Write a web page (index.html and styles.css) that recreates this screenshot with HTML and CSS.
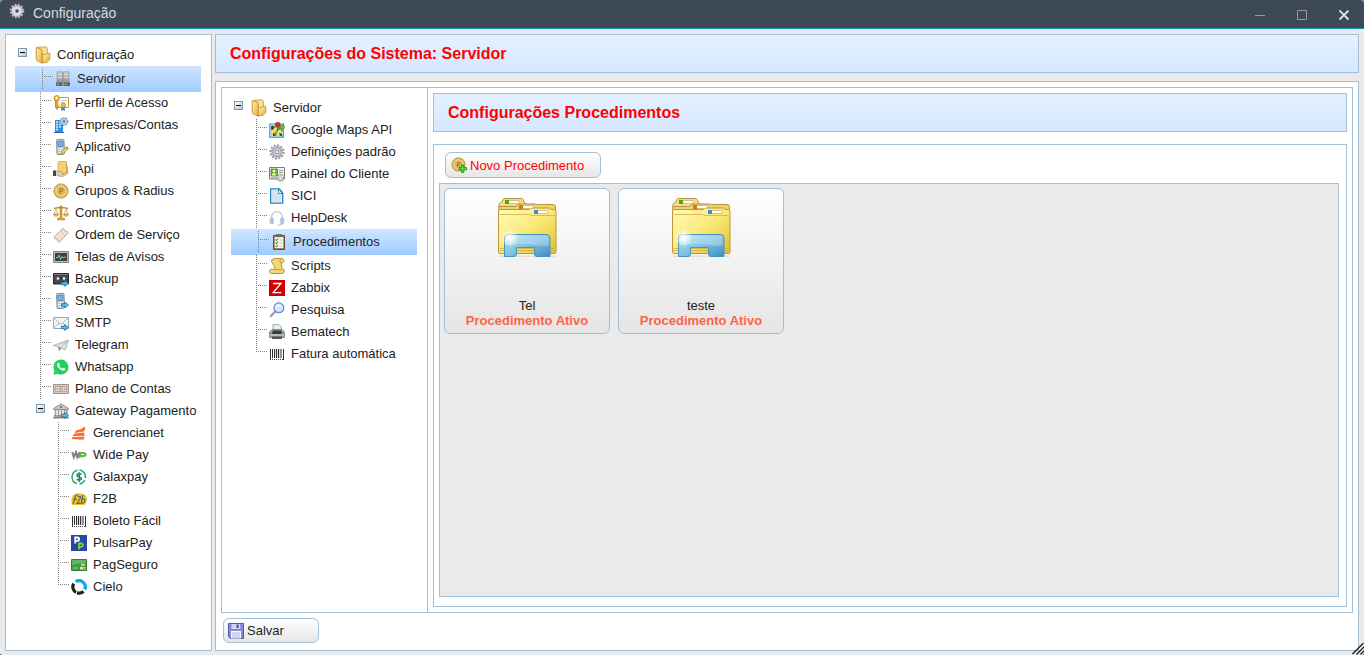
FILE: index.html
```html
<!DOCTYPE html>
<html lang="pt-BR">
<head>
<meta charset="utf-8">
<title>Configuração</title>
<link rel="stylesheet" href="styles.css">
</head>
<body>
<svg class="sprite" aria-hidden="true">
  <defs>
    <linearGradient id="g-file" x1="0" y1="0" x2="1" y2="1"><stop offset="0" stop-color="#fffbc0"/><stop offset=".5" stop-color="#fbe978"/><stop offset="1" stop-color="#dfc02c"/></linearGradient>
    <linearGradient id="g-tray" x1="0" y1="0" x2="1" y2="1"><stop offset="0" stop-color="#aee6f4"/><stop offset=".5" stop-color="#7fc1e3"/><stop offset="1" stop-color="#3e8cc4"/></linearGradient>
    <radialGradient id="g-glow"><stop offset="0" stop-color="#fff"/><stop offset=".3" stop-color="#fff" stop-opacity=".7"/><stop offset="1" stop-color="#fff" stop-opacity="0"/></radialGradient>
    <linearGradient id="g-folder" x1="0" y1="0" x2="1" y2="1"><stop offset="0" stop-color="#fff0ae"/><stop offset="1" stop-color="#e6ae38"/></linearGradient>
    <linearGradient id="g-rack" x1="0" y1="0" x2="0" y2="1"><stop offset="0" stop-color="#cfcfcf"/><stop offset="1" stop-color="#8f8f8f"/></linearGradient>
  </defs>
  <symbol id="arrow" viewBox="0 0 8 7"><path d="M.5 2.300h3.200V.6L7.400 3.500 3.700 6.400V4.700H.5z" fill="#5cc0f5" stroke="#1d6fae" stroke-width=".9"/></symbol>
  <symbol id="folder" viewBox="0 0 16 18">
    <path d="M3 1h8.500l.8 1.500V13H3z" fill="#fbe09a" stroke="#cf9c30" stroke-width=".9"/>
    <path d="M1.200 1.500l5 1.700c.8.300 1 .8 1 1.500v12.600l-5-2.600c-.7-.4-1-.9-1-1.600z" fill="url(#g-folder)" stroke="#c28e25" stroke-width=".9"/>
    <path d="M7.500 16.800V8.500h3l1-1.200h3.300v6.200L12 16.200z" fill="url(#g-folder)" stroke="#c9962a" stroke-width=".9"/>
  </symbol>
  <symbol id="server" viewBox="0 0 16 16">
    <path d="M2 .8h5.500v11.500H2zM8.500.8H14v11.500H8.500z" fill="url(#g-rack)" stroke="#8a8a8a" stroke-width=".6"/>
    <path d="M2.500 3.500H7M2.500 6.500H7M9 3.500h4.500M9 6.500h4.500" stroke="#e6e6e6" stroke-width=".8"/>
    <path d="M1 11.500h6.500V15H1zM8.500 11.500H15V15H8.500z" fill="#5f6160"/><path d="M2 13.300h2M9.800 13.300h2" stroke="#8fe08f"/>
  </symbol>
  <symbol id="profile" viewBox="0 0 16 16">
    <path d="M2.500 2.500h13v10h-13z" fill="#fdfdf4" stroke="#c59a3c"/><path d="M8 5.500h6M8 7.500h4" stroke="#b8b8c8" stroke-width=".8"/>
    <path d="M8.700 11L8 16l2-1 2 1-.5-5z" fill="#2f7ed0"/><circle cx="10.300" cy="10.500" r="2.300" fill="#f5c02e" stroke="#b37d12" stroke-width=".7"/>
    <path d="M3.200 5v8.500l1.300 1.200V12h1.200v-1.500H4.700V5z" fill="#f2bb2e" stroke="#b07c14" stroke-width=".7"/><circle cx="3.700" cy="3.300" r="2.700" fill="#f8d155" stroke="#b07c14" stroke-width=".9"/><circle cx="3.700" cy="2.700" r=".9" fill="#fff"/>
  </symbol>
  <symbol id="company" viewBox="0 0 16 16">
    <path d="M2 3h8v12H2z" fill="#2f8ede"/><path d="M3 5h2M6 5h2M3 7.500h2M6 7.500h2M3 10h2M6 10h2M3 12.500h2" stroke="#d7efff" stroke-width="1.400"/><path d="M1 15.500h10" stroke="#1f64ab"/>
    <circle cx="11" cy="4.500" r="3.600" fill="#b9cfe2" stroke="#7699b8" stroke-dasharray="1.500 1.100" stroke-width="1.600"/><circle cx="11" cy="4.500" r="1.200" fill="#5b7f9f"/>
  </symbol>
  <symbol id="phone" viewBox="0 0 16 16">
    <path d="M9.500 0h1v2h-1z" fill="#888"/><path d="M3.500 1.500q0-1 1-1h5.500q1 0 1 1l.5 12.500q0 1-1 1.300l-5.500.3q-1 0-1-1z" fill="#c3c7cb" stroke="#81868c" stroke-width=".9"/><path d="M5 2.500h4.800v5H5z" fill="#6bb8f0" stroke="#3a6c9c" stroke-width=".6"/>
    <path d="M5.200 9.500h5M5.200 11.500h5M5.200 13.500h5" stroke="#fafafa" stroke-width="1.200" stroke-dasharray="1.300 .5"/>
  </symbol>
  <symbol id="app" viewBox="0 0 16 16"><use href="#phone" width="16" height="16"/><path d="M7.500 15.500l.8-2.600 5-5 1.800 1.800-5 5z" fill="#f2d14d" stroke="#6d8730" stroke-width=".6"/><path d="M12.800 8.400l1-1 1.700 1.700-1 1z" fill="#e0564b"/></symbol>
  <symbol id="sms" viewBox="0 0 16 16"><use href="#phone" width="16" height="16"/><use href="#arrow" x="8" y="8.500" width="8" height="7"/></symbol>
  <symbol id="api" viewBox="0 0 16 16">
    <path d="M5 1.500q0-1 1-1h7.500v12H6l-1-1z" fill="#f3cf75" stroke="#d8a94a" stroke-width=".8"/><path d="M13 1v11h2V6l-1-2z" fill="#d9a84a"/>
    <path d="M4 10.500h3l3 1.500c1 .5 0 1.300-1 1.200 2.500 0 4-1.700 6-2.200.8.500-1 2.300-4 4.200H6l-2-1z" fill="#eecba5" stroke="#ad8158" stroke-width=".6"/><path d="M0 9.500h3.800V15H0z" fill="#47424b"/><path d="M3 10h1v5H3z" fill="#ddd"/>
  </symbol>
  <symbol id="coin" viewBox="0 0 16 16"><circle cx="8" cy="8" r="7.100" fill="#e0b75a" stroke="#b38c3a" stroke-width=".8"/><circle cx="8" cy="8" r="5" fill="#dfb75a" stroke="#f5e0a8"/><path d="M6.900 10.800V5.700h1.600a1.400 1.400 0 0 1 0 2.900H7" fill="none" stroke="#94702a" stroke-width=".9"/></symbol>
  <symbol id="scale" viewBox="0 0 16 16">
    <path d="M7 1h2v12h2.500v2h-7v-2H7z" fill="#dba733" stroke="#a9771b" stroke-width=".5"/><path d="M1 3.500c3-.3 4-1 7-1s4 .7 7 1" fill="none" stroke="#b98521" stroke-width="1.300"/>
    <path d="M3 4L1 9h4L3 4zM13 4l-2 5h4l-2-5z" fill="none" stroke="#c39b50" stroke-width=".7"/><path d="M.3 9.300h5.400c-.5 2.600-4.800 2.600-5.400 0zM10.300 9.300h5.400c-.5 2.600-4.800 2.600-5.400 0z" fill="#e7bb4d" stroke="#a9771b" stroke-width=".5"/>
  </symbol>
  <symbol id="ticket" viewBox="0 0 16 16"><path d="M.8 10.500l9-9 1.500.9c-.2 1.700 1 2.400 2.500 1.900l1.500 1.400-9 9.500-1.700-1c.2-1.800-.9-2.700-2.400-2.300z" fill="#f2e3d3" stroke="#b29b88" stroke-width=".9"/><path d="M7.500 4.200l4.400 4.500" stroke="#c4ae9a" stroke-dasharray="1 .8"/></symbol>
  <symbol id="monitor" viewBox="0 0 16 16"><path d="M.5 2.500h15v11H.5z" fill="#bcbcbc" stroke="#858585"/><path d="M2 4h12v8H2z" fill="#3b4241"/><path d="M3 8.500h2l1-2.500 1.500 4.500L9 7.500l1 1.500 1-.8h2" fill="none" stroke="#7ce0b5" stroke-width=".9"/></symbol>
  <symbol id="tape" viewBox="0 0 16 16"><path d="M.5 2.500h15v10.500H.5z" fill="#444" stroke="#2b2b2b"/><path d="M1 3.500h14" stroke="#777"/><path d="M2.500 5.500h11v4h-11z" fill="#555"/><circle cx="5" cy="7.500" r="1.300" fill="#eee"/><circle cx="11" cy="7.500" r="1.300" fill="#eee"/><path d="M7 6.500h2v2H7z" fill="#222"/><use href="#arrow" x="8" y="9" width="8" height="7"/></symbol>
  <symbol id="mail" viewBox="0 0 16 16"><path d="M.5 2.500h15v11H.5z" fill="#f1f6f5" stroke="#9aabab"/><path d="M.8 3l7.200 6.500L15.200 3M.8 13.200L6 8M15 13l-5-5" fill="none" stroke="#9aabab" stroke-width=".8"/><use href="#arrow" x="8" y="9" width="8" height="7"/></symbol>
  <symbol id="plane" viewBox="0 0 16 16"><path d="M.3 8.500L15.500 3l-3.300 10-4-2-2 3-.9-4z" fill="#dce5e5" stroke="#9aabab" stroke-width=".8"/><path d="M5.300 9.700L15 3.300 8.200 11l-2 2.700z" fill="#8f9e9e"/><path d="M6 9.700l7-5-5 5.500z" fill="#fff"/></symbol>
  <symbol id="whatsapp" viewBox="0 0 16 16"><path d="M.2 15.800l1.200-4.100A7.500 7.500 0 1 1 4.500 14.700z" fill="#25d05c"/><path d="M4.700 4.300c.7-.8 1.300-.6 1.500 0l.6 1.400c.1.500-.8.900-.6 1.300.8 1.400 1.700 2.200 3 2.700.5.200.8-1 1.300-.9l1.600.8c.6.300 0 1.700-.9 2-2.500.9-7.500-3.500-7-6 .1-.6.300-1 .5-1.300z" fill="#fff"/></symbol>
  <symbol id="bill" viewBox="0 0 16 16"><path d="M.5 3.500h15v9H.5z" fill="#d9cbbb" stroke="#a4948a"/><path d="M2.500 5.500h11v5h-11z" fill="#e9dfd3" stroke="#b8a79a"/><circle cx="8" cy="8" r="2" fill="#a18f80"/><path d="M8 6.500v3" stroke="#fff"/><path d="M3.500 8h1.500M11 8h1.500" stroke="#85766a"/></symbol>
  <symbol id="bank" viewBox="0 0 16 16"><path d="M.5 5.500L8 .8l7.500 4.700v1H.5z" fill="#c7c7c7" stroke="#7b7b7b" stroke-width=".8"/><circle cx="8" cy="4" r="1" fill="#666"/><path d="M2.500 7v6M5.500 7v6M8.500 7v6M11.500 7v6M13.800 7v6" stroke="#8c8c8c" stroke-width="1.500"/><path d="M3 7v6M6 7v6M9 7v6M12 7v6" stroke="#ddd" stroke-width=".5"/><path d="M1 13h14M.3 14.800h15.400" stroke="#858585" stroke-width="1.500"/><use href="#arrow" x="8" y="9" width="8" height="7"/></symbol>
  <symbol id="gerencianet" viewBox="0 0 16 16"><path d="M5 5.600C8 4.900 11 3.700 14.200 1.400c0 2.200-.3 3.900-1.300 5.200L3.500 8zM3 8.800l9.800-1.300c.6 1 .9 2.100.9 3.300L1.600 11.300zM1.200 12.300l12-.8c0 1.300-.2 2.300-.6 3.300L.6 14z" fill="#f37032"/></symbol>
  <symbol id="widepay" viewBox="0 0 16 16"><path d="M1.200 5l1.600 5.200L5 5.200l1.300 5L8.800 5" fill="none" stroke="#7b807d" stroke-width="2"/><path d="M8 11l1.500-5h3.400c2.500.4 1.800 3.200-.7 3.200H9" fill="none" stroke="#67b345" stroke-width="2.200"/></symbol>
  <symbol id="galaxpay" viewBox="0 0 16 16"><path d="M6.500 1.200A7 7 0 0 0 6 14.700M8.500 1a7 7 0 0 1 6 8M13.800 11a7 7 0 0 1-5.300 4" fill="none" stroke="#23a670" stroke-width="1.400"/><path d="M10.500 5.600c-1-1.300-4.600-1-4.500.8.100 2.200 4.600 1 4.600 3.200 0 1.800-3.800 2-4.800.5M8.200 3.200v9.700" fill="none" stroke="#168b58" stroke-width="1.500"/></symbol>
  <symbol id="f2b" viewBox="0 0 16 16"><path d="M1 6c2-5 13-5 14.500 0 1 5-1 8-2.500 8H2C0 13 0 9 1 6z" fill="#efc51f"/><path d="M2 13L4.300 5.500C4.800 4 5.800 3.500 7 4M2.500 8.300h3M7 6.200c1-1.500 3-1 2.500.6L6 12.300h3.500M12 3.800L10.300 12c2.200.8 3.800-1 3.700-2.600-.2-1.500-1.800-1.500-2.800-.7" fill="none" stroke="#59606a" stroke-width="1.200"/></symbol>
  <symbol id="barcode" viewBox="0 0 16 16"><path d="M1.500 3v11M3.500 3v9M5.500 3v9M9.500 3v9M12 3v9M14.500 3v11" stroke="#333"/><path d="M7.500 3v9" stroke="#333" stroke-width="1.300"/><path d="M11 3v9" stroke="#777" stroke-width=".6"/><path d="M3 13.500h11" stroke="#444" stroke-dasharray="1 1"/></symbol>
  <symbol id="pulsar" viewBox="0 0 16 16"><path d="M0 0h16v16H0z" fill="#2747a5"/><path d="M4.200 8.500V2.500h2.200a1.600 1.600 0 0 1 0 3.400H4.200" fill="none" stroke="#fff" stroke-width="1.800"/><path d="M8 14.500V8.500h2.200a1.600 1.600 0 0 1 0 3.400H8" fill="none" stroke="#7fd13b" stroke-width="1.800"/></symbol>
  <symbol id="card" viewBox="0 0 16 16"><path d="M.5 2.500h15v11H.5z" fill="#3d9a41" stroke="#2f8035"/><path d="M1 3h14v2.500L1 8z" fill="#62b765"/><path d="M2 11h5" stroke="#bfe8bf" stroke-dasharray="1.200 .6"/><path d="M10 6.500h4V9h-4z" fill="#e3c75a"/><path d="M9 10h5.500v2.500H9z" fill="#d7dfdc"/><path d="M12 10.500h2v1.500h-2z" fill="#e0763b"/></symbol>
  <symbol id="cielo" viewBox="0 0 16 16"><path d="M4.600 2.600A6.300 6.300 0 0 1 13.700 10.500" fill="none" stroke="#12a9ee" stroke-width="3.300"/><path d="M2.700 4.600A6.300 6.300 0 0 0 5 13.300M6 13.800a6.300 6.300 0 0 0 6.500-1.500" fill="none" stroke="#222" stroke-width="3.200"/></symbol>
  <symbol id="map" viewBox="0 0 16 16"><path d="M.8 2h13.500v13.200H.8z" fill="#fff" stroke="#3a8fc4" stroke-width="1.200"/><path d="M2.200 3.500H13v10.300H2.200z" fill="#58a83c"/><path d="M2.200 9l3-3 4-1-5 8.800h-2zM7 13.800l2-5.500 4-1v3.500l-2 3z" fill="#f0df74"/><path d="M2.200 4h2.300v3.500H2.200zM4 10.500l3 3.300H4zM10 11l3 1v1.800h-2z" fill="#353a31"/><path d="M8.600 4v5M12.800 6v4" stroke="#555" stroke-width=".8"/><circle cx="8.700" cy="2.500" r="2.300" fill="#e02b20" stroke="#9c1812" stroke-width=".6"/><circle cx="13.300" cy="5" r="2.200" fill="#6fc228" stroke="#3e8014" stroke-width=".6"/></symbol>
  <symbol id="gear" viewBox="0 0 16 16"><circle cx="8" cy="8" r="6.600" fill="none" stroke="#9395a3" stroke-width="2" stroke-dasharray="1.900 1.550"/><circle cx="8" cy="8" r="5.900" fill="#aeb0bd"/><circle cx="8" cy="8" r="4" fill="#cdced8" stroke="#9b9dab" stroke-width=".6"/><circle cx="8" cy="8" r="1.700" fill="#fff" stroke="#777a88" stroke-width=".8"/></symbol>
  <symbol id="titlegear" viewBox="0 0 16 16"><circle cx="8" cy="8" r="6.300" fill="none" stroke="#b7b9c8" stroke-width="2" stroke-dasharray="1.900 1.400"/><circle cx="8" cy="8" r="5.700" fill="#c9cbd8"/><circle cx="8" cy="8" r="3.800" fill="#e3e4ec"/><circle cx="8" cy="8" r="1.800" fill="#3d4a56" stroke="#8a8c9b" stroke-width=".8"/></symbol>
  <symbol id="panel" viewBox="0 0 16 16"><path d="M.5 1.500h15v11.500H.5z" fill="#f4f4f4" stroke="#7b7b7b"/><path d="M2 3h6.500v7H2z" fill="#63b81f" stroke="#3e7d10" stroke-width=".7"/><circle cx="5" cy="5" r="1.300" fill="#fff"/><path d="M3 9.500V8c1-1.400 3-1.400 4 0v1.500z" fill="#d8f5bd"/><path d="M10 4.500h4M10 6.500h4M2 11.800h5" stroke="#999"/><circle cx="11.500" cy="11.800" r="3.200" fill="#e7eeea" stroke="#87918b" stroke-width="1.500" stroke-dasharray="1.500 .8"/><circle cx="11.500" cy="11.800" r="1.200" fill="#fff" stroke="#87918b" stroke-width=".6"/></symbol>
  <symbol id="page" viewBox="0 0 16 16"><path d="M1.700.8h8.500l3.500 4v10.400h-12z" fill="#fff" stroke="#2583b4" stroke-width="1.300"/><path d="M3 2h6v4h3.500v8H3z" fill="#cfe5f3"/><path d="M9.500 1v4.500h4z" fill="#fff" stroke="#2583b4" stroke-width=".9"/></symbol>
  <symbol id="headset" viewBox="0 0 16 16"><path d="M2.500 9C1.500-.8 14.500-.8 13.500 9" fill="none" stroke="#c8cdd8" stroke-width="1.300"/><path d="M1.300 8.500c1-.8 2.300-.6 3 0v5c-1.500 1-3 .3-3.200-1.200zM14.700 8.500c-1-.8-2.300-.6-3 0v5c1.500 1 3 .3 3.200-1.200z" fill="#a9c9f0" stroke="#8fa6ca" stroke-width=".6"/><path d="M13.500 13c0 1.800-2.500 2-5 2" fill="none" stroke="#b5bccb"/></symbol>
  <symbol id="clipboard" viewBox="0 0 16 16"><path d="M2.500 1.500h11v14h-11z" fill="#b27b4b" stroke="#704a29"/><path d="M3.800 3h8.400v11H3.800z" fill="#fbfdfb"/><path d="M5.500.3h5v2.500h-5z" fill="#777" stroke="#444" stroke-width=".5"/><path d="M4.500 5.500l1 1 1.700-2M4.500 8.700l1 1 1.700-2M4.500 11.800l1 1 1.700-2" fill="none" stroke="#2ba62c" stroke-width="1.100"/><path d="M8.300 6h3M8.300 9h3M8.300 12h3" stroke="#a5b0a9" stroke-width=".8"/></symbol>
  <symbol id="scroll" viewBox="0 0 16 16"><path d="M2.500 3.500C2.500 1 4.500.5 6.500.5h6.500c2.500 0 2.500 4.500 0 4.200l-.8-.2c0 2.500 1.200 4 .8 7l2.300.4c0 3.300-1.500 3.600-3.300 3.600H3c-3.500 0-3.500-4.500 0-4.300l2.500.2C6.500 8.500 4 7 2.500 3.500z" fill="#f4d676" stroke="#b38626" stroke-width=".9"/><path d="M5.500 11.500l6.500.3M11.500 1.500c-1 1-.6 2.500.5 3" fill="none" stroke="#b38626" stroke-width=".8"/></symbol>
  <symbol id="zabbix" viewBox="0 0 16 16"><path d="M0 0h16v16H0z" fill="#d40000"/><path d="M4 3.500h8L4.200 12.700H12.300" fill="none" stroke="#fff" stroke-width="1.300"/></symbol>
  <symbol id="search" viewBox="0 0 16 16"><path d="M1.800 14.300L6 9.800" stroke="#9b9ba3" stroke-width="2.200" stroke-linecap="round"/><circle cx="9.900" cy="5.800" r="4.900" fill="#d4e8fd" stroke="#6f86d6" stroke-width="1.300"/><path d="M7 5.500c.4-2 3-2.800 4.500-1.700" fill="none" stroke="#fff" stroke-width="1.300"/></symbol>
  <symbol id="printer" viewBox="0 0 16 16"><path d="M4 .7h6l2.500 2.500V8H4z" fill="#e3f2f4" stroke="#829a9d" stroke-width=".8"/><path d="M.5 8L3 5.500h10L15.500 8v5.500H.5z" fill="#9a9a9a" stroke="#777" stroke-width=".7"/><path d="M4 6.500h8L13.500 10h-11z" fill="#3a3a3a"/><path d="M1 11h14" stroke="#d9d9d9"/><path d="M3 12.500h10V15H3z" fill="#555"/><path d="M12 10h2" stroke="#67d44c"/></symbol>
  <symbol id="coinadd" viewBox="0 0 16 16"><use href="#coin" width="15" height="15"/><path d="M10.500 8h2.300v2.500h2.700v2.400h-2.700v2.600h-2.300v-2.600H8v-2.400h2.500z" fill="#4bdb3f" stroke="#178a1a" stroke-width=".8"/></symbol>
  <symbol id="floppy" viewBox="0 0 16 16"><path d="M.5.500h15v15H2.300L.5 13.700z" fill="#858ae0" stroke="#5557a8"/><path d="M3.500 1h8.700v5H3.500z" fill="#cfd8ee"/><path d="M8.500 1.500h2.200v3.500H8.500z" fill="#5256a8"/><path d="M3 8h10v7.500H3z" fill="#fafafd"/><path d="M4 10h8M4 12h8M4 14h8" stroke="#a9aab8" stroke-width=".9"/></symbol>
  <symbol id="folders" viewBox="0 0 64 64">
    <path d="M4 60.500h57v1.500H4z" fill="#000" opacity=".08"/>
    <path d="M4 14V9.500l1.500-2h1L8 4.500q.5-1 1.500-1h17q1 0 1.500 1l2 4h1v6z" fill="#f5df7d" stroke="#b4924a"/>
    <path d="M4 20V11.500h17l2-2.500h17.500l2 .5H58q2.500 0 2.500 2v9z" fill="#eed663" stroke="#b4924a"/>
    <path d="M3.500 57V16q0-1.500 1.500-1.500h29l2-1.500h18q1.500 0 2 1.500h3.500q1.500 0 1.500 1.500v41q0 1.500-1.500 1.500H5q-1.500 0-1.500-1.500z" fill="url(#g-file)" stroke="#bf9634"/>
    <path d="M4.500 19.500h29q1.500 0 2.500 1h23.500M4.500 53.500h55M4.500 55.500h55" fill="none" stroke="#d0ad48" stroke-width=".8"/>
    <path d="M11 5.500h13v3H11z" fill="#fff" stroke="#c2a25a" stroke-width=".6"/><path d="M10 5h4v4h-4z" fill="#4dab12"/>
    <path d="M25 10.500h13v3H25z" fill="#fff" stroke="#c2a25a" stroke-width=".6"/><path d="M24 10h4v4h-4z" fill="#ef6a24"/>
    <path d="M40 15.500h13v3H40z" fill="#fff" stroke="#c2a25a" stroke-width=".6"/><path d="M39 15h4v4h-4z" fill="#3190dc"/>
    <path d="M9.500 61.500V43q0-3.500 3.500-3.500h38.500q3.500 0 3.500 3.500v18.500H42q-2.500 0-2.500-2.500v-6.500H21.500V59q0 2.500-2.500 2.500z" fill="url(#g-tray)" stroke="#4b93b9"/>
    <path d="M10.500 50.500V43q0-2.500 2.500-2.500h38.500q2.500 0 2.500 2.500v7.500c-12 2-16-4.500-43.500 0z" fill="#fff" opacity=".25"/>
    <circle cx="15" cy="43" r="9" fill="url(#g-glow)"/><path d="M15 31l.6 11 10-1-10 2 .5 11-1.500-10-8.600 3 8-4-6-6 6.500 5z" fill="#fff" opacity=".8"/>
  </symbol>
</svg>

<div class="window">
  <header class="titlebar">
    <svg class="icon" aria-hidden="true"><use href="#titlegear"/></svg>
    <h1 class="titlebar-text">Configuração</h1>
    <div class="window-controls">
      <button type="button" class="window-button" aria-label="Minimizar"><svg viewBox="0 0 11 11" aria-hidden="true"><path d="M0 5.500h10" stroke="#9a9a9a"/></svg></button>
      <button type="button" class="window-button" aria-label="Maximizar"><svg viewBox="0 0 11 11" aria-hidden="true"><path d="M.5.500h9v9h-9z" fill="none" stroke="#9a9a9a"/></svg></button>
      <button type="button" class="window-button" aria-label="Fechar"><svg viewBox="0 0 11 11" aria-hidden="true"><path d="M.5.500l9 9M9.500.5l-9 9" stroke="#e6e6e6" stroke-width="1.800"/></svg></button>
    </div>
  </header>

  <div class="workspace">
    <nav class="box sidebar tree" aria-label="Configuração">
      <div class="row"><button type="button" class="toggle" aria-label="Recolher Configuração"></button><svg class="icon folder-icon" aria-hidden="true"><use href="#folder"/></svg><a class="label" href="#">Configuração</a></div>
      <ul class="branch">
        <li class="row selected"><span class="guide"></span><svg class="icon" aria-hidden="true"><use href="#server"/></svg><a class="label" href="#" aria-current="page">Servidor</a></li>
        <li class="row"><span class="guide"></span><svg class="icon" aria-hidden="true"><use href="#profile"/></svg><a class="label" href="#">Perfil de Acesso</a></li>
        <li class="row"><span class="guide"></span><svg class="icon" aria-hidden="true"><use href="#company"/></svg><a class="label" href="#">Empresas/Contas</a></li>
        <li class="row"><span class="guide"></span><svg class="icon" aria-hidden="true"><use href="#app"/></svg><a class="label" href="#">Aplicativo</a></li>
        <li class="row"><span class="guide"></span><svg class="icon" aria-hidden="true"><use href="#api"/></svg><a class="label" href="#">Api</a></li>
        <li class="row"><span class="guide"></span><svg class="icon" aria-hidden="true"><use href="#coin"/></svg><a class="label" href="#">Grupos &amp; Radius</a></li>
        <li class="row"><span class="guide"></span><svg class="icon" aria-hidden="true"><use href="#scale"/></svg><a class="label" href="#">Contratos</a></li>
        <li class="row"><span class="guide"></span><svg class="icon" aria-hidden="true"><use href="#ticket"/></svg><a class="label" href="#">Ordem de Serviço</a></li>
        <li class="row"><span class="guide"></span><svg class="icon" aria-hidden="true"><use href="#monitor"/></svg><a class="label" href="#">Telas de Avisos</a></li>
        <li class="row"><span class="guide"></span><svg class="icon" aria-hidden="true"><use href="#tape"/></svg><a class="label" href="#">Backup</a></li>
        <li class="row"><span class="guide"></span><svg class="icon" aria-hidden="true"><use href="#sms"/></svg><a class="label" href="#">SMS</a></li>
        <li class="row"><span class="guide"></span><svg class="icon" aria-hidden="true"><use href="#mail"/></svg><a class="label" href="#">SMTP</a></li>
        <li class="row"><span class="guide"></span><svg class="icon" aria-hidden="true"><use href="#plane"/></svg><a class="label" href="#">Telegram</a></li>
        <li class="row"><span class="guide"></span><svg class="icon" aria-hidden="true"><use href="#whatsapp"/></svg><a class="label" href="#">Whatsapp</a></li>
        <li class="row"><span class="guide"></span><svg class="icon" aria-hidden="true"><use href="#bill"/></svg><a class="label" href="#">Plano de Contas</a></li>
        <li>
          <div class="row"><button type="button" class="toggle" aria-label="Recolher Gateway Pagamento"></button><svg class="icon" aria-hidden="true"><use href="#bank"/></svg><a class="label" href="#">Gateway Pagamento</a></div>
          <ul class="branch nested">
            <li class="row"><span class="guide"></span><svg class="icon" aria-hidden="true"><use href="#gerencianet"/></svg><a class="label" href="#">Gerencianet</a></li>
            <li class="row"><span class="guide"></span><svg class="icon" aria-hidden="true"><use href="#widepay"/></svg><a class="label" href="#">Wide Pay</a></li>
            <li class="row"><span class="guide"></span><svg class="icon" aria-hidden="true"><use href="#galaxpay"/></svg><a class="label" href="#">Galaxpay</a></li>
            <li class="row"><span class="guide"></span><svg class="icon" aria-hidden="true"><use href="#f2b"/></svg><a class="label" href="#">F2B</a></li>
            <li class="row"><span class="guide"></span><svg class="icon" aria-hidden="true"><use href="#barcode"/></svg><a class="label" href="#">Boleto Fácil</a></li>
            <li class="row"><span class="guide"></span><svg class="icon" aria-hidden="true"><use href="#pulsar"/></svg><a class="label" href="#">PulsarPay</a></li>
            <li class="row"><span class="guide"></span><svg class="icon" aria-hidden="true"><use href="#card"/></svg><a class="label" href="#">PagSeguro</a></li>
            <li class="row last"><span class="guide"></span><svg class="icon" aria-hidden="true"><use href="#cielo"/></svg><a class="label" href="#">Cielo</a></li>
          </ul>
        </li>
      </ul>
    </nav>

    <main class="content">
      <h2 class="heading">Configurações do Sistema: Servidor</h2>
      <section class="box main-panel">
        <div class="box split">
          <nav class="subnav tree" aria-label="Servidor">
            <div class="row"><button type="button" class="toggle" aria-label="Recolher Servidor"></button><svg class="icon folder-icon" aria-hidden="true"><use href="#folder"/></svg><a class="label" href="#">Servidor</a></div>
            <ul class="branch">
              <li class="row"><span class="guide"></span><svg class="icon" aria-hidden="true"><use href="#map"/></svg><a class="label" href="#">Google Maps API</a></li>
              <li class="row"><span class="guide"></span><svg class="icon" aria-hidden="true"><use href="#gear"/></svg><a class="label" href="#">Definições padrão</a></li>
              <li class="row"><span class="guide"></span><svg class="icon" aria-hidden="true"><use href="#panel"/></svg><a class="label" href="#">Painel do Cliente</a></li>
              <li class="row"><span class="guide"></span><svg class="icon" aria-hidden="true"><use href="#page"/></svg><a class="label" href="#">SICI</a></li>
              <li class="row"><span class="guide"></span><svg class="icon" aria-hidden="true"><use href="#headset"/></svg><a class="label" href="#">HelpDesk</a></li>
              <li class="row selected"><span class="guide"></span><svg class="icon" aria-hidden="true"><use href="#clipboard"/></svg><a class="label" href="#" aria-current="page">Procedimentos</a></li>
              <li class="row"><span class="guide"></span><svg class="icon" aria-hidden="true"><use href="#scroll"/></svg><a class="label" href="#">Scripts</a></li>
              <li class="row"><span class="guide"></span><svg class="icon" aria-hidden="true"><use href="#zabbix"/></svg><a class="label" href="#">Zabbix</a></li>
              <li class="row"><span class="guide"></span><svg class="icon" aria-hidden="true"><use href="#search"/></svg><a class="label" href="#">Pesquisa</a></li>
              <li class="row"><span class="guide"></span><svg class="icon" aria-hidden="true"><use href="#printer"/></svg><a class="label" href="#">Bematech</a></li>
              <li class="row last"><span class="guide"></span><svg class="icon" aria-hidden="true"><use href="#barcode"/></svg><a class="label" href="#">Fatura automática</a></li>
            </ul>
          </nav>
          <div class="detail">
            <h3 class="heading">Configurações Procedimentos</h3>
            <div class="box procedures">
              <button type="button" class="button button-new"><svg class="icon" aria-hidden="true"><use href="#coinadd"/></svg>Novo Procedimento</button>
              <ul class="cards">
                <li><button type="button" class="card"><svg class="card-icon" aria-hidden="true"><use href="#folders"/></svg><span class="card-name">Tel</span><span class="card-status">Procedimento Ativo</span></button></li>
                <li><button type="button" class="card"><svg class="card-icon" aria-hidden="true"><use href="#folders"/></svg><span class="card-name">teste</span><span class="card-status">Procedimento Ativo</span></button></li>
              </ul>
            </div>
          </div>
        </div>
        <div class="actions">
          <button type="button" class="button button-save"><svg class="icon" aria-hidden="true"><use href="#floppy"/></svg>Salvar</button>
        </div>
      </section>
    </main>
  </div>
  <svg class="grip" viewBox="0 0 12 12" aria-hidden="true"><path d="M.5 11L11.500 0M4.500 11.500L12 4M8.500 11.500L12 8" stroke="#111" stroke-width="1.200"/></svg>
</div>
</body>
</html>
```
FILE: styles.css
```css
* {
  box-sizing: border-box;
}

html {
  height: 100%;
  background: linear-gradient(#5b9bd0, #2c3e4c);
}

body {
  margin: 0;
  height: 100%;
  font: 13px/15px "Liberation Sans", Arial, sans-serif;
  color: #222;
}

button {
  font: inherit;
  color: inherit;
  cursor: pointer;
}

ul {
  list-style: none;
  margin: 0;
  padding: 0;
}

.sprite {
  position: absolute;
  width: 0;
  height: 0;
}

.icon {
  flex: none;
  width: 16px;
  height: 16px;
}

/* Window frame */
.window {
  position: relative;
  display: flex;
  flex-direction: column;
  min-height: 100%;
  background: #eaeaea;
  border-radius: 4px 4px 2px 2px;
  overflow: hidden;
}

.titlebar {
  display: flex;
  align-items: center;
  height: 29px;
  padding: 0 14px 2px 9px;
  gap: 8px;
  background: #3d4a56;
  border-bottom: 1px solid #1496b0;
}

.titlebar .icon {
  margin-bottom: 4px;
}

.titlebar-text {
  flex: 1;
  margin: 0;
  font-size: 14px;
  font-weight: normal;
  color: #d4dade;
}

.window-controls {
  display: flex;
  gap: 31px;
  padding-top: 4px;
}

.window-button {
  display: flex;
  padding: 0;
  border: 0;
  background: none;
}

.window-button svg {
  width: 11px;
  height: 11px;
}

.workspace {
  flex: 1;
  display: flex;
  gap: 3px;
  padding: 5px 5px 4px;
}

.box {
  background: #fff;
  border: 1px solid #a3bfd6;
}

.sidebar {
  flex: none;
  width: 207px;
}

/* Tree navigation */
.tree {
  padding: 9px 10px 9px 9px;
}

.row {
  display: flex;
  align-items: center;
  height: 22px;
  padding-left: 3px;
  white-space: nowrap;
}

.branch .row {
  padding-left: 21px;
}

.nested .row {
  padding-left: 39px;
}

.branch .selected {
  height: 26px;
  padding: 2px 2px 2px 23px;
  background: linear-gradient(#d0e6ff, #9fcbff);
}

.label {
  margin-left: 6px;
  line-height: 22px;
  color: inherit;
  text-decoration: none;
}

.folder-icon {
  height: 18px;
}

.toggle {
  flex: none;
  align-self: flex-start;
  width: 9px;
  height: 9px;
  margin: 4px 8px 0 0;
  padding: 0;
  border: 1px solid #7b99b5;
  background:
    linear-gradient(#000, #000) center / 5px 1px no-repeat,
    linear-gradient(135deg, #fff, #c8c4bb);
}

.guide {
  flex: none;
  align-self: stretch;
  width: 13px;
  margin-left: 4px;
  background:
    repeating-linear-gradient(#808080 0 1px, transparent 1px 2px) 0 0 / 1px 100% no-repeat,
    repeating-linear-gradient(90deg, #808080 0 1px, transparent 1px 2px) 0 8px / 11px 1px no-repeat;
}

.last .guide {
  background-size: 1px 9px, 11px 1px;
}

/* Content */
.content {
  flex: 1;
  min-width: 0;
  display: flex;
  flex-direction: column;
  gap: 8px;
}

.heading {
  margin: 0;
  padding: 0 14px;
  border: 1px solid #a3bfd6;
  background: linear-gradient(#e4f1ff, #d5e7ff);
  font-size: 16px;
  font-weight: bold;
  line-height: 37px;
  color: #f00;
}

.main-panel {
  flex: 1;
  display: flex;
  flex-direction: column;
  padding: 5px 5px 7px;
}

.split {
  flex: 1;
  display: flex;
}

.subnav {
  flex: none;
  width: 206px;
  border-right: 1px solid #a3bfd6;
}

.detail {
  flex: 1;
  min-width: 0;
  display: flex;
  flex-direction: column;
  gap: 12px;
  padding: 5px;
}

.procedures {
  flex: 1;
  display: flex;
  flex-direction: column;
  align-items: flex-start;
  gap: 5px;
  padding: 7px 7px 9px 5px;
}

.button {
  display: flex;
  align-items: center;
  gap: 3px;
  height: 26px;
  padding: 0 16px 0 5px;
  border: 1px solid #a3bfd6;
  border-radius: 6px;
  background: linear-gradient(#fff, #e6e6e6);
}

.button-new {
  margin-left: 6px;
  color: #f00;
}

.button-save {
  min-width: 96px;
  height: 25px;
  padding-left: 4px;
}

.cards {
  flex: 1;
  align-self: stretch;
  display: flex;
  flex-wrap: wrap;
  align-content: flex-start;
  gap: 8px;
  padding: 4px;
  background: #eaeaea;
  border: 1px solid #a3bfd6;
}

.card {
  display: flex;
  flex-direction: column;
  align-items: center;
  width: 166px;
  height: 146px;
  padding: 6px 8px 5px;
  border: 1px solid #a3bfd6;
  border-radius: 6px;
  background: linear-gradient(#fff, #e5e5e5);
}

.card-icon {
  width: 64px;
  height: 64px;
  margin-bottom: auto;
}

.card-status {
  font-weight: bold;
  color: #ff6347;
}

.actions {
  display: flex;
  padding: 5px 2px 0;
}

.grip {
  position: absolute;
  right: 0;
  bottom: 0;
  width: 12px;
  height: 12px;
}
```
